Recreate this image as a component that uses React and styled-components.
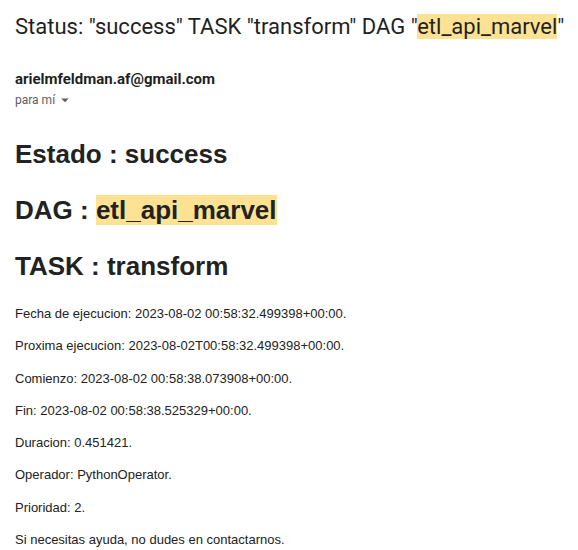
import React from 'react';
import styled, { createGlobalStyle } from 'styled-components';

const GlobalStyle = createGlobalStyle`
  body {
    margin: 0;
    background: #ffffff;
  }
`;

const details = [
  'Fecha de ejecucion: 2023-08-02 00:58:32.499398+00:00.',
  'Proxima ejecucion: 2023-08-02T00:58:32.499398+00:00.',
  'Comienzo: 2023-08-02 00:58:38.073908+00:00.',
  'Fin: 2023-08-02 00:58:38.525329+00:00.',
  'Duracion: 0.451421.',
  'Operador: PythonOperator.',
  'Prioridad: 2.',
  'Si necesitas ayuda, no dudes en contactarnos.',
];

export default function App() {
  return (
    <>
      <GlobalStyle />
      <Page>
        <Subject>
          Status: "success" TASK "transform" DAG "<Mark>etl_api_marvel</Mark>"
        </Subject>

        <Sender>
          <SenderName>arielmfeldman.af@gmail.com</SenderName>
          <Recipient>
            para mí
            <svg width="18" height="18" viewBox="0 0 24 24" aria-hidden="true">
              <path d="M7 10l5 5 5-5z" fill="#5e5e5e" />
            </svg>
          </Recipient>
        </Sender>

        <Body>
          <Heading>Estado : success</Heading>
          <Heading>
            DAG : <Mark>etl_api_marvel</Mark>
          </Heading>
          <Heading>TASK : transform</Heading>

          <Details>
            {details.map((line) => (
              <Line key={line}>{line}</Line>
            ))}
          </Details>
        </Body>
      </Page>
    </>
  );
}

const Page = styled.div`
  padding: 0 15px;
  color: #1f1f1f;
`;

const Mark = styled.span`
  background-color: #fde293;
`;

const Subject = styled.h1`
  margin: 13px 0 0;
  font-family: Roboto, 'Noto Sans', sans-serif;
  font-size: 22px;
  line-height: 28px;
  font-weight: 400;
  color: #1f1f1f;
  white-space: nowrap;
`;

const Sender = styled.div`
  display: flex;
  flex-direction: column;
  gap: 2px;
  margin-top: 28px;
  font-family: Roboto, 'Noto Sans', sans-serif;
`;

const SenderName = styled.div`
  font-size: 15px;
  line-height: 20px;
  font-weight: 700;
  color: #1f1f1f;
`;

const Recipient = styled.div`
  display: flex;
  align-items: center;
  font-size: 12px;
  line-height: 16px;
  color: #5e5e5e;

  svg {
    margin-left: 1px;
  }
`;

const Body = styled.div`
  margin-top: 30px;
  font-family: 'Liberation Sans', Arial, sans-serif;
  color: #222222;
`;

const Heading = styled.h2`
  margin: 0 0 26px;
  font-size: 26px;
  line-height: 30px;
  font-weight: 700;

  &:last-of-type {
    margin-bottom: 23px;
  }
`;

const Details = styled.div`
  display: flex;
  flex-direction: column;
  gap: 12.8px;
`;

const Line = styled.p`
  margin: 0;
  font-size: 13px;
  line-height: 19.5px;
`;
